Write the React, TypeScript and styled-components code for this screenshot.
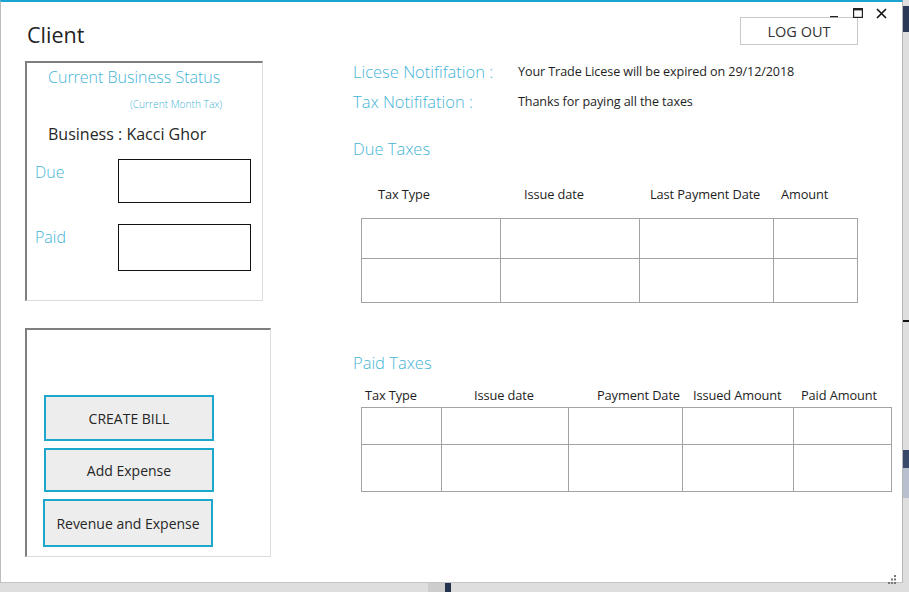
import React from "react";
import styled, { createGlobalStyle } from "styled-components";

const CYAN = "#46b5d6";
const FONT = `"Open Sans", "Noto Sans", "Liberation Sans", sans-serif`;

const Global = createGlobalStyle`
  html, body { margin: 0; padding: 0; }
  body {
    width: 909px;
    height: 592px;
    overflow: hidden;
    background: #e2e2e2;
    font-family: ${FONT};
  }
  * { box-sizing: border-box; }
`;

const Desktop = styled.div`
  position: relative;
  width: 909px;
  height: 592px;
  background: #dedede;
`;

const DeskMark = styled.div<{ $c: string }>`
  position: absolute;
  background: ${(p) => p.$c};
`;

const Window = styled.div`
  position: relative;
  width: 903px;
  height: 583px;
  background: #fff;
  border-top: 2px solid #1ba3d2;
  border-left: 1px solid #bdbdbd;
  border-right: 1px solid #b5b5b5;
  border-bottom: 1px solid #c4c4c4;
  display: flex;
  flex-direction: column;
`;

const Caption = styled.div`
  position: absolute;
  top: 4px;
  right: 14px;
  display: flex;
  align-items: center;
  gap: 9px;
`;

const CapBtn = styled.span`
  display: flex;
  align-items: center;
  justify-content: center;
  width: 14px;
  height: 14px;
`;

const TitleRow = styled.div`
  display: flex;
  justify-content: space-between;
  align-items: flex-start;
  height: 50px;
  padding: 0 44px 0 26px;
`;

const Title = styled.h1`
  margin: 19px 0 0;
  font-family: ${FONT};
  font-weight: 400;
  font-size: 21.5px;
  line-height: 28px;
  color: #222;
`;

const LogOut = styled.button`
  margin-top: 15px;
  width: 118px;
  height: 28px;
  border: 1px solid #c8c8c8;
  background: #fff;
  font-family: ${FONT};
  font-size: 14.5px;
  color: #333;
  padding: 0;
`;

const Body = styled.div`
  display: flex;
  align-items: flex-start;
  padding-left: 24px;
`;

const LeftCol = styled.div`
  display: flex;
  flex-direction: column;
  gap: 27px;
  padding-top: 9px;
`;

const Panel = styled.div<{ $w: number; $h: number }>`
  width: ${(p) => p.$w}px;
  height: ${(p) => p.$h}px;
  border-top: 2px solid #7e7e7e;
  border-left: 2px solid #7e7e7e;
  border-right: 1px solid #dcdcdc;
  border-bottom: 1px solid #dcdcdc;
  display: flex;
  flex-direction: column;
`;

const StatusHead = styled.div`
  padding: 3px 0 0 21px;
  font-size: 16px;
  font-weight: 300;
  line-height: 22px;
  color: ${CYAN};
`;

const SubHead = styled.div`
  padding: 9px 0 0 103px;
  font-size: 10.2px;
  font-weight: 300;
  line-height: 14px;
  color: ${CYAN};
`;

const BusinessLine = styled.div`
  padding: 11px 0 0 21px;
  font-size: 16px;
  line-height: 24px;
  color: #262626;
`;

const FieldRow = styled.div<{ $top: number }>`
  display: flex;
  align-items: flex-start;
  margin-top: ${(p) => p.$top}px;
  padding-left: 8px;
`;

const FieldLabel = styled.div`
  width: 83px;
  font-size: 16px;
  font-weight: 300;
  line-height: 22px;
  color: ${CYAN};
  padding-top: 2px;
`;

const FieldBox = styled.div<{ $h: number }>`
  width: 133px;
  height: ${(p) => p.$h}px;
  border: 1px solid #111;
`;

const ButtonStack = styled.div`
  display: flex;
  flex-direction: column;
  gap: 7px;
  padding: 65px 0 0 17px;
`;

const ActionButton = styled.button<{ $h: number; $shift?: number }>`
  width: 170px;
  height: ${(p) => p.$h}px;
  margin-left: ${(p) => p.$shift ?? 0}px;
  border: 2px solid #1ea7cc;
  background: #ededed;
  font-family: ${FONT};
  font-size: 14px;
  color: #262626;
  padding: 0;
`;

const RightCol = styled.div`
  margin-left: 82px;
  display: flex;
  flex-direction: column;
  padding-top: 4px;
`;

const NotifRow = styled.div`
  display: flex;
  align-items: center;
  height: 30px;
`;

const NotifLabel = styled.div`
  width: 165px;
  font-size: 16.5px;
  font-weight: 300;
  color: ${CYAN};
`;

const NotifValue = styled.div`
  font-size: 12.6px;
  color: #1e1e1e;
  letter-spacing: -0.1px;
`;

const Section = styled.div<{ $top: number }>`
  margin-top: ${(p) => p.$top}px;
  font-size: 16.5px;
  font-weight: 300;
  line-height: 22px;
  color: ${CYAN};
`;

const HeadRow = styled.div<{ $cols: string; $top: number }>`
  display: grid;
  grid-template-columns: ${(p) => p.$cols};
  margin: ${(p) => p.$top}px 0 0 9px;
  height: 20px;
  align-items: center;
`;

const HeadCell = styled.div<{ $pad: number }>`
  padding-left: ${(p) => p.$pad}px;
  font-size: 12.8px;
  color: #1e1e1e;
  white-space: nowrap;
  letter-spacing: -0.1px;
`;

const Grid = styled.div<{ $cols: string; $rows: string; $top: number }>`
  display: grid;
  grid-template-columns: ${(p) => p.$cols};
  grid-template-rows: ${(p) => p.$rows};
  margin: ${(p) => p.$top}px 0 0 8px;
  border-top: 1px solid #a3a3a3;
  border-left: 1px solid #a3a3a3;
  align-self: flex-start;
`;

const Cell = styled.div`
  border-right: 1px solid #a3a3a3;
  border-bottom: 1px solid #a3a3a3;
`;

const Grip = styled.div`
  position: absolute;
  right: 5px;
  bottom: 4px;
  width: 10px;
  height: 10px;
`;

const dueCols = "139px 139px 134px 84px";
const paidCols = "80px 127px 114px 111px 98px";

const dueHeads: [string, number][] = [
  ["Tax Type", 16],
  ["Issue date", 23],
  ["Last Payment Date", 10],
  ["Amount", 7],
];
const paidHeads: [string, number][] = [
  ["Tax Type", 3],
  ["Issue date", 32],
  ["Payment Date", 28],
  ["Issued Amount", 10],
  ["Paid Amount", 7],
];

function Table({ cols, rows, n, top }: { cols: string; rows: string; n: number; top: number }) {
  return (
    <Grid $cols={cols} $rows={rows} $top={top}>
      {Array.from({ length: n }).map((_, i) => (
        <Cell key={i} />
      ))}
    </Grid>
  );
}

export default function App() {
  return (
    <Desktop>
      <Global />
      <DeskMark $c="#2b3b57" style={{ left: 903, top: 6, width: 6, height: 26 }} />
      <DeskMark $c="#111" style={{ left: 902, top: 320, width: 7, height: 2 }} />
      <DeskMark $c="#39496a" style={{ left: 903, top: 450, width: 6, height: 18 }} />
      <DeskMark $c="#b8c0d0" style={{ left: 903, top: 468, width: 6, height: 30 }} />
      <DeskMark $c="#cdcdcd" style={{ left: 428, top: 583, width: 17, height: 9 }} />
      <DeskMark $c="#23324d" style={{ left: 445, top: 583, width: 6, height: 9 }} />
      <Window>
        <Caption>
          <CapBtn>
            <svg width="10" height="10" viewBox="0 0 10 10">
              <rect x="0" y="8" width="8" height="1.2" fill="#222" />
            </svg>
          </CapBtn>
          <CapBtn>
            <svg width="10" height="10" viewBox="0 0 10 10">
              <rect x="0.6" y="0.6" width="8.8" height="8.8" fill="none" stroke="#222" strokeWidth="1.2" />
              <rect x="0.6" y="0.6" width="8.8" height="1.8" fill="#222" />
            </svg>
          </CapBtn>
          <CapBtn>
            <svg width="11" height="11" viewBox="0 0 11 11">
              <path d="M1 1 L10 10 M10 1 L1 10" stroke="#111" strokeWidth="1.6" />
            </svg>
          </CapBtn>
        </Caption>
        <TitleRow>
          <Title>Client</Title>
          <LogOut>LOG OUT</LogOut>
        </TitleRow>
        <Body>
          <LeftCol>
            <Panel $w={238} $h={240}>
              <StatusHead>Current Business Status</StatusHead>
              <SubHead>(Current Month Tax)</SubHead>
              <BusinessLine>Business : Kacci Ghor</BusinessLine>
              <FieldRow $top={13}>
                <FieldLabel>Due</FieldLabel>
                <FieldBox $h={44} />
              </FieldRow>
              <FieldRow $top={21}>
                <FieldLabel>Paid</FieldLabel>
                <FieldBox $h={47} />
              </FieldRow>
            </Panel>
            <Panel $w={246} $h={229}>
              <ButtonStack>
                <ActionButton $h={46}>CREATE BILL</ActionButton>
                <ActionButton $h={44}>Add Expense</ActionButton>
                <ActionButton $h={48} $shift={-1}>Revenue and Expense</ActionButton>
              </ButtonStack>
            </Panel>
          </LeftCol>
          <RightCol>
            <NotifRow>
              <NotifLabel>Licese Notififation :</NotifLabel>
              <NotifValue>Your Trade Licese will be expired on 29/12/2018</NotifValue>
            </NotifRow>
            <NotifRow>
              <NotifLabel>Tax Notififation :</NotifLabel>
              <NotifValue>Thanks for paying all the taxes</NotifValue>
            </NotifRow>
            <Section $top={22}>Due Taxes</Section>
            <HeadRow $cols={dueCols} $top={24}>
              {dueHeads.map(([t, p]) => (
                <HeadCell key={t} $pad={p}>{t}</HeadCell>
              ))}
            </HeadRow>
            <Table cols={dueCols} rows="40px 44px" n={8} top={14} />
            <Section $top={49}>Paid Taxes</Section>
            <HeadRow $cols={paidCols} $top={11}>
              {paidHeads.map(([t, p]) => (
                <HeadCell key={t} $pad={p}>{t}</HeadCell>
              ))}
            </HeadRow>
            <Table cols={paidCols} rows="37px 47px" n={10} top={2} />
          </RightCol>
        </Body>
        <Grip>
          <svg width="10" height="10" viewBox="0 0 10 10" fill="#777">
            <rect x="7" y="0" width="2" height="2" />
            <rect x="4" y="3.5" width="2" height="2" />
            <rect x="7" y="3.5" width="2" height="2" />
            <rect x="1" y="7" width="2" height="2" />
            <rect x="4" y="7" width="2" height="2" />
            <rect x="7" y="7" width="2" height="2" />
          </svg>
        </Grip>
      </Window>
    </Desktop>
  );
}
